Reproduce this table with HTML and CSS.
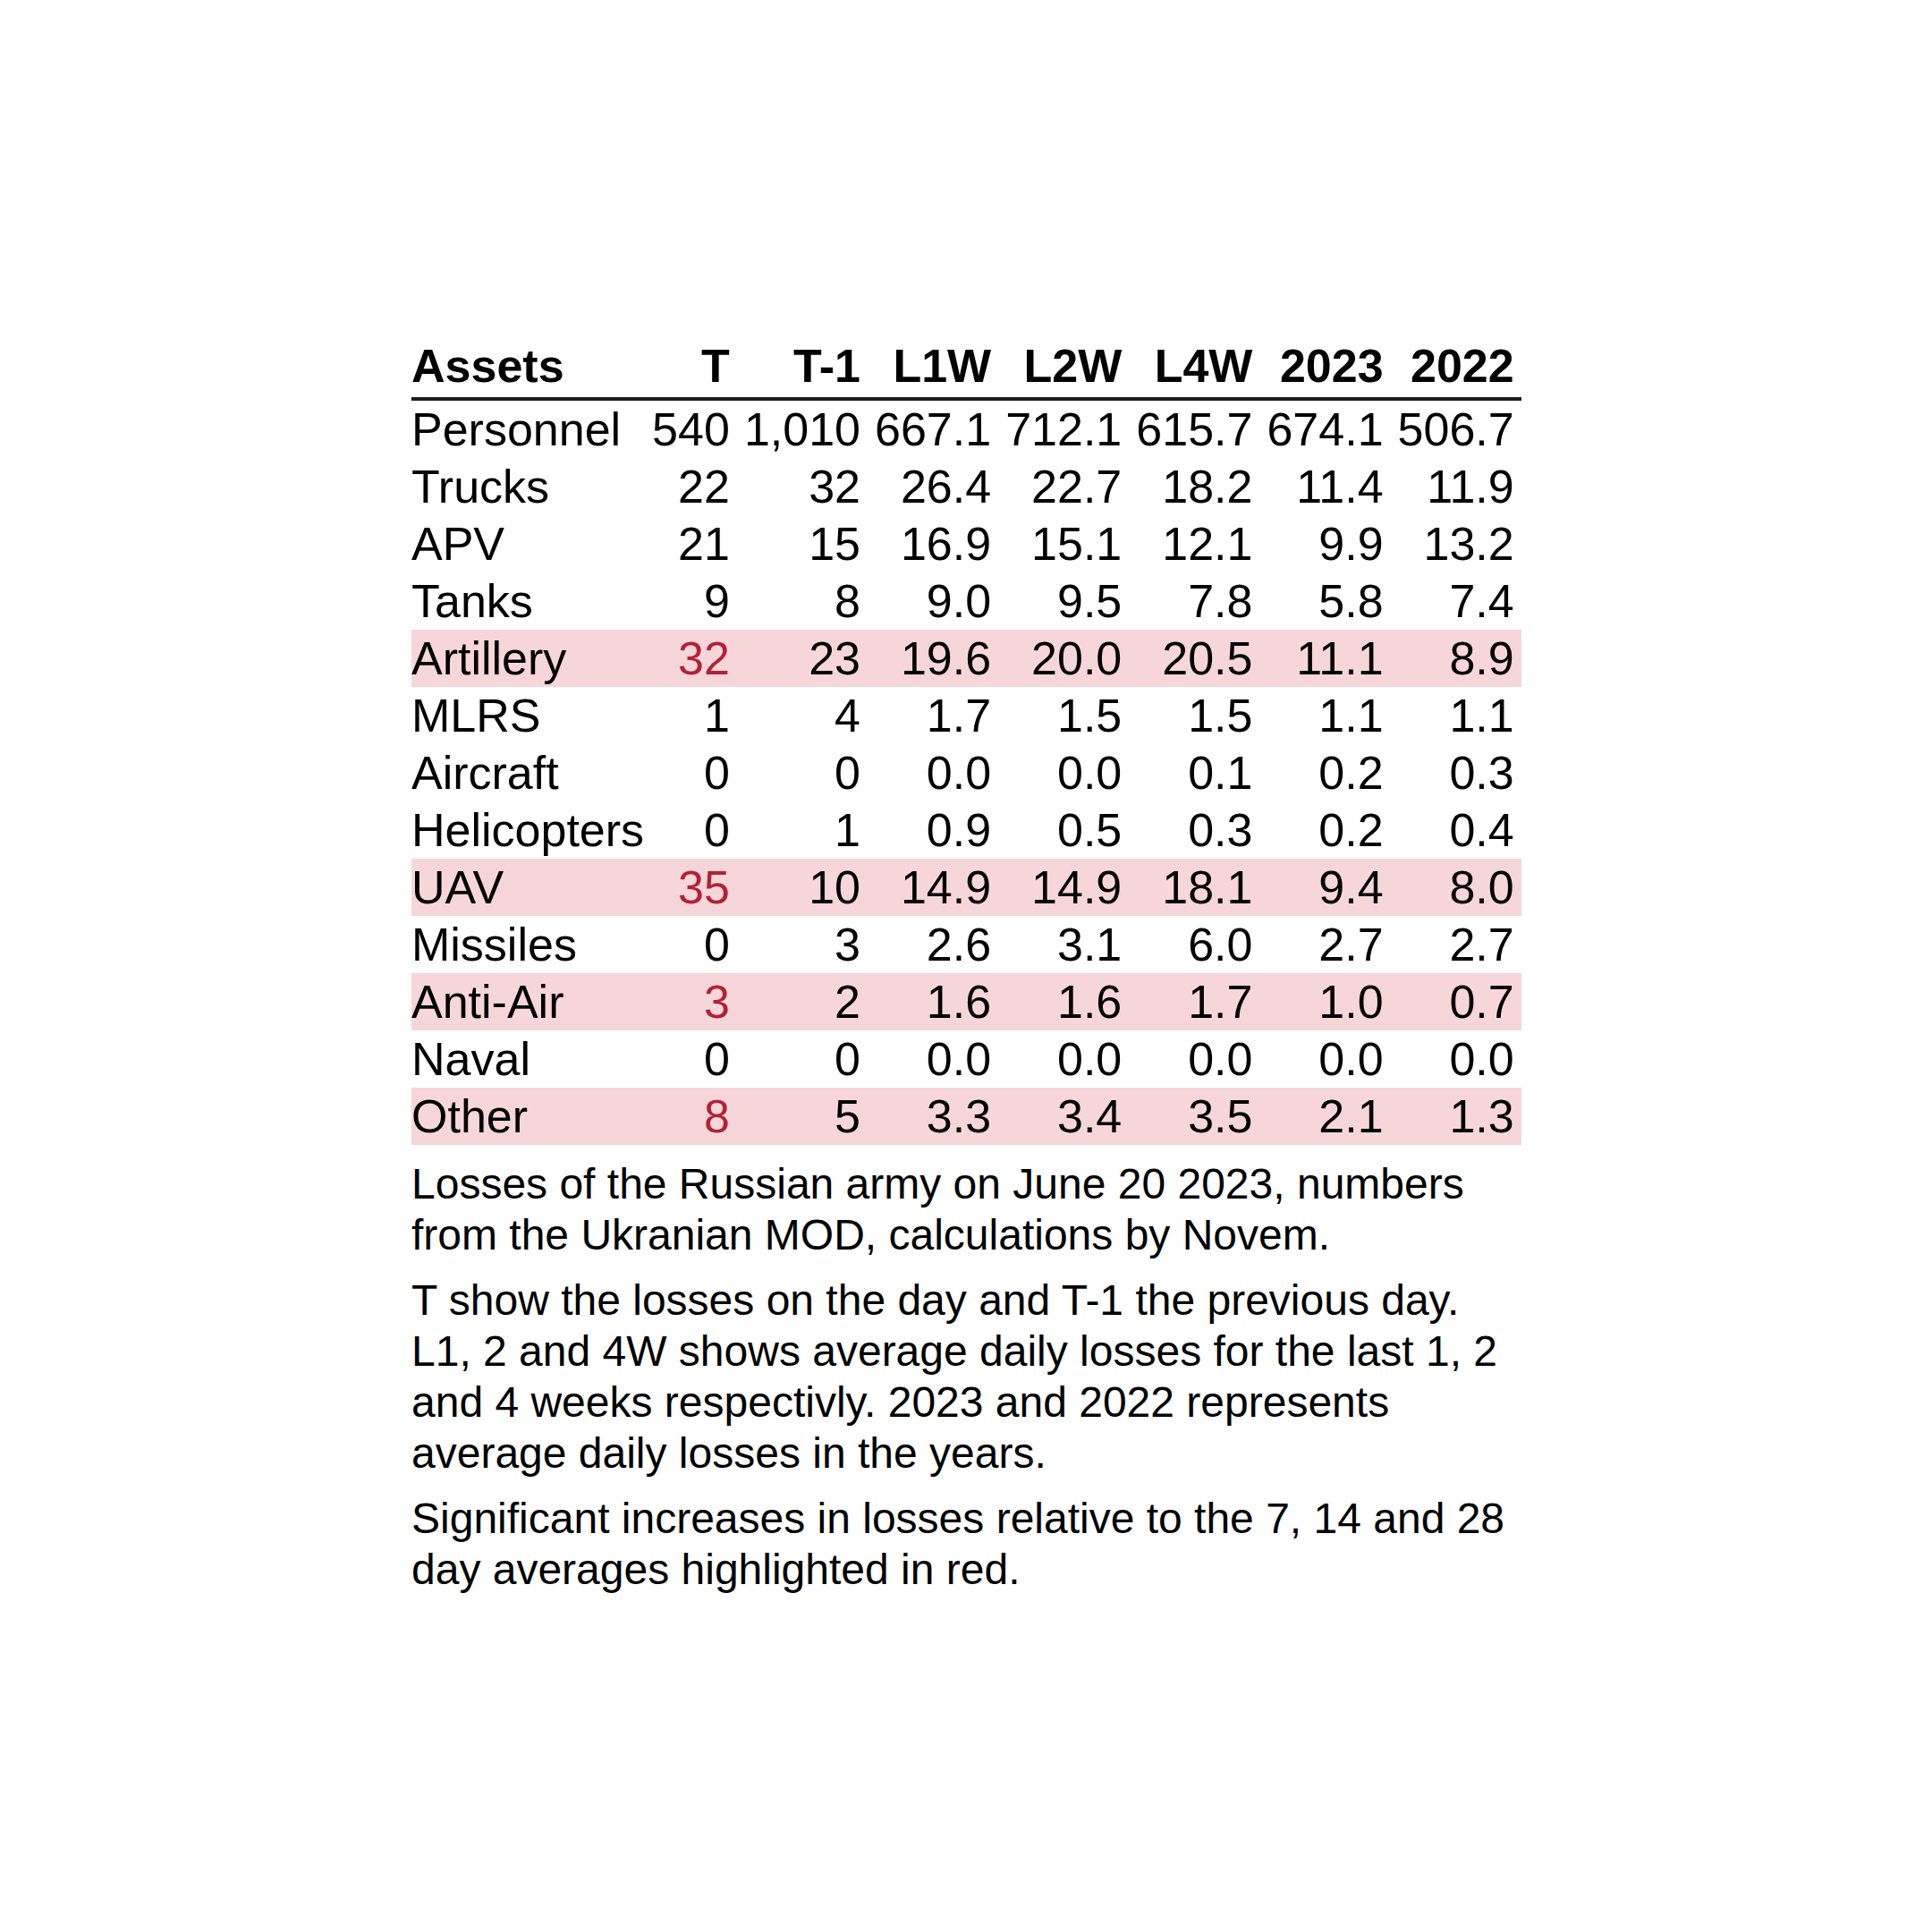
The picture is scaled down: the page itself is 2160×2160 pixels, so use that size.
FILE: index.html
```html
<!DOCTYPE html>
<html lang="en">
<head>
<meta charset="utf-8">
<title>Losses of the Russian army</title>
<link rel="stylesheet" href="styles.css">
</head>
<body>
<div class="page">
  <div class="report">
    <table class="losses">
      <thead>
        <tr><th class="name">Assets</th><th>T</th><th>T-1</th><th>L1W</th><th>L2W</th><th>L4W</th><th>2023</th><th>2022</th></tr>
      </thead>
      <tbody>
        <tr><td class="name">Personnel</td><td>540</td><td>1,010</td><td>667.1</td><td>712.1</td><td>615.7</td><td>674.1</td><td>506.7</td></tr>
        <tr><td class="name">Trucks</td><td>22</td><td>32</td><td>26.4</td><td>22.7</td><td>18.2</td><td>11.4</td><td>11.9</td></tr>
        <tr><td class="name">APV</td><td>21</td><td>15</td><td>16.9</td><td>15.1</td><td>12.1</td><td>9.9</td><td>13.2</td></tr>
        <tr><td class="name">Tanks</td><td>9</td><td>8</td><td>9.0</td><td>9.5</td><td>7.8</td><td>5.8</td><td>7.4</td></tr>
        <tr class="hot"><td class="name">Artillery</td><td class="up">32</td><td>23</td><td>19.6</td><td>20.0</td><td>20.5</td><td>11.1</td><td>8.9</td></tr>
        <tr><td class="name">MLRS</td><td>1</td><td>4</td><td>1.7</td><td>1.5</td><td>1.5</td><td>1.1</td><td>1.1</td></tr>
        <tr><td class="name">Aircraft</td><td>0</td><td>0</td><td>0.0</td><td>0.0</td><td>0.1</td><td>0.2</td><td>0.3</td></tr>
        <tr><td class="name">Helicopters</td><td>0</td><td>1</td><td>0.9</td><td>0.5</td><td>0.3</td><td>0.2</td><td>0.4</td></tr>
        <tr class="hot"><td class="name">UAV</td><td class="up">35</td><td>10</td><td>14.9</td><td>14.9</td><td>18.1</td><td>9.4</td><td>8.0</td></tr>
        <tr><td class="name">Missiles</td><td>0</td><td>3</td><td>2.6</td><td>3.1</td><td>6.0</td><td>2.7</td><td>2.7</td></tr>
        <tr class="hot"><td class="name">Anti-Air</td><td class="up">3</td><td>2</td><td>1.6</td><td>1.6</td><td>1.7</td><td>1.0</td><td>0.7</td></tr>
        <tr><td class="name">Naval</td><td>0</td><td>0</td><td>0.0</td><td>0.0</td><td>0.0</td><td>0.0</td><td>0.0</td></tr>
        <tr class="hot"><td class="name">Other</td><td class="up">8</td><td>5</td><td>3.3</td><td>3.4</td><td>3.5</td><td>2.1</td><td>1.3</td></tr>
      </tbody>
    </table>
    <div class="notes">
      <p>Losses of the Russian army on June 20 2023, numbers<br>from the Ukranian MOD, calculations by Novem.</p>
      <p>T show the losses on the day and T-1 the previous day.<br>L1, 2 and 4W shows average daily losses for the last 1, 2<br>and 4 weeks respectivly. 2023 and 2022 represents<br>average daily losses in the years.</p>
      <p>Significant increases in losses relative to the 7, 14 and 28<br>day averages highlighted in red.</p>
    </div>
  </div>
</div>
</body>
</html>
```

FILE: styles.css
```css
html, body {
  margin: 0;
  padding: 0;
  background: #ffffff;
}

body {
  font-family: "Liberation Sans", Arial, sans-serif;
  color: #000000;
}

.page {
  width: 2160px;
  height: 2160px;
  display: flex;
  justify-content: flex-start;
  align-items: flex-start;
  padding: 377px 0 0 460px;
  box-sizing: border-box;
}

.report {
  display: flex;
  flex-direction: column;
  width: 1240px;
}

.losses {
  border-collapse: collapse;
  border-spacing: 0;
  font-size: 52px;
  white-space: nowrap;
}

.losses th,
.losses td {
  padding: 0 8px;
  line-height: 64px;
  text-align: right;
  font-weight: normal;
}

.losses th {
  font-weight: bold;
  padding-bottom: 3px;
  border-bottom: 4px solid #1c1c1c;
}

.losses .name {
  text-align: left;
  padding-left: 0;
  padding-right: 1px;
}

.losses tr.hot td {
  background: #f7d6da;
}

.losses td.up {
  color: #b22234;
}

.notes {
  margin-top: 15px;
  font-size: 48px;
  line-height: 57px;
  white-space: nowrap;
}

.notes p {
  margin: 0 0 16px 0;
}
```
